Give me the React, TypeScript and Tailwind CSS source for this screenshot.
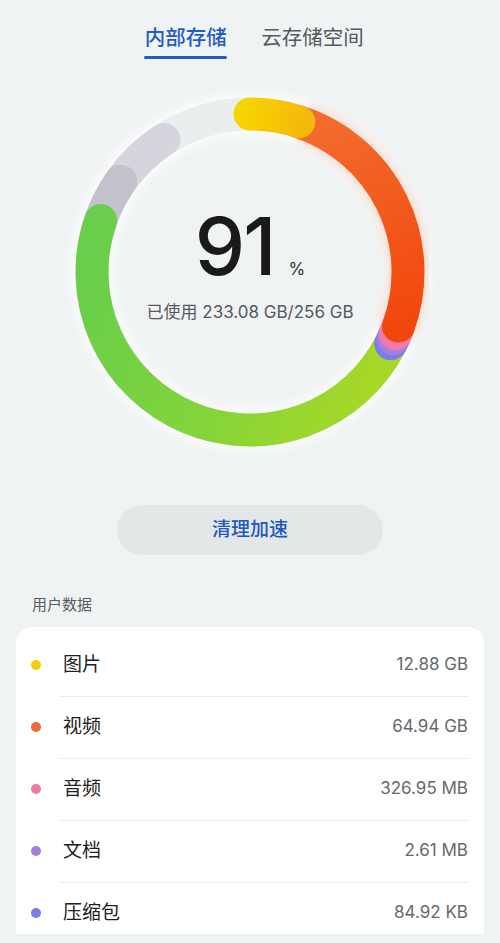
import React from "react";

const CX = 200;
const CY = 200;
const R = 158;

function pt(a: number) {
  const rad = (a * Math.PI) / 180;
  return [CX + R * Math.sin(rad), CY - R * Math.cos(rad)];
}

function arc(a1: number, a2: number) {
  const [x1, y1] = pt(a1);
  const [x2, y2] = pt(a2);
  const large = a2 - a1 > 180 ? 1 : 0;
  return `M ${x1.toFixed(2)} ${y1.toFixed(2)} A ${R} ${R} 0 ${large} 1 ${x2.toFixed(2)} ${y2.toFixed(2)}`;
}

// drawn bottom → top; each end cap sits over the next segment
const segments = [
  { from: 305, to: 327, stroke: "#d6d5de" },
  { from: 289, to: 305, stroke: "#c3c1cb" },
  { from: 117, to: 289, stroke: "url(#green)" },
  { from: 114, to: 117, stroke: "#7b7cf0" },
  { from: 112, to: 115, stroke: "#a77ee0" },
  { from: 110, to: 113, stroke: "#f07aa8" },
  { from: 18, to: 110, stroke: "url(#orange)" },
  { from: 0, to: 18, stroke: "url(#yellow)" },
];

const rows = [
  { name: "图片", size: "12.88 GB", dot: "bg-[#f2cf00]" },
  { name: "视频", size: "64.94 GB", dot: "bg-[#ee6a3a]" },
  { name: "音频", size: "326.95 MB", dot: "bg-[#ee7aa6]" },
  { name: "文档", size: "2.61 MB", dot: "bg-[#a27fdc]" },
  { name: "压缩包", size: "84.92 KB", dot: "bg-[#7e7ee8]" },
];

function Ring() {
  return (
    <svg width="400" height="400" viewBox="0 0 400 400" className="block">
      <defs>
        <linearGradient id="yellow" gradientUnits="userSpaceOnUse" x1="195" y1="42" x2="255" y2="52">
          <stop offset="0" stopColor="#f7d400" />
          <stop offset="1" stopColor="#f5b80c" />
        </linearGradient>
        <linearGradient id="orange" gradientUnits="userSpaceOnUse" x1="260" y1="50" x2="350" y2="255">
          <stop offset="0" stopColor="#f26c2e" />
          <stop offset="1" stopColor="#f2470c" />
        </linearGradient>
        <linearGradient id="green" gradientUnits="userSpaceOnUse" x1="350" y1="260" x2="45" y2="150">
          <stop offset="0" stopColor="#a8d826" />
          <stop offset="0.5" stopColor="#82d43a" />
          <stop offset="1" stopColor="#68ce4c" />
        </linearGradient>
        <filter id="glow" x="-20%" y="-20%" width="140%" height="140%">
          <feGaussianBlur stdDeviation="6" />
        </filter>
      </defs>
      <circle cx={CX} cy={CY} r={R} fill="none" stroke="#ffffff" strokeWidth="40" opacity="0.9" filter="url(#glow)" />
      <path d={arc(20, 112)} fill="none" stroke="#f26a2c" strokeWidth="34" opacity="0.35" filter="url(#glow)" />
      <circle cx={CX} cy={CY} r={R} fill="none" stroke="#ebeeee" strokeWidth="33" />
      {segments.map((s, i) => (
        <path key={i} d={arc(s.from, s.to)} fill="none" stroke={s.stroke} strokeWidth="33" strokeLinecap="round" />
      ))}
    </svg>
  );
}

export default function App() {
  return (
    <div
      className="w-[500px] h-[943px] overflow-hidden bg-[#f0f3f3] flex flex-col"
      style={{ fontFamily: 'Inter, "Noto Sans CJK SC", sans-serif' }}
    >
      {/* tabs */}
      <div className="h-[72px] flex justify-center items-start pt-[24px] gap-[34px] pl-[8px]">
        <div className="flex flex-col items-center">
          <span className="text-[20.5px] leading-[28px] font-medium text-[#1f5cc4]">内部存储</span>
          <span className="mt-[4px] w-[83px] h-[3px] rounded-full bg-[#1f5cc4]" />
        </div>
        <span className="text-[20.5px] leading-[28px] text-[#555a5e]">云存储空间</span>
      </div>

      {/* usage ring */}
      <div className="relative mx-auto w-[400px] h-[400px]">
        <Ring />
        <div className="absolute inset-0 flex flex-col items-center pt-[134px]">
          <div className="flex items-baseline">
            <span className="text-[80px] leading-none font-medium text-[#1a1a1a] tracking-[-2px]">91</span>
            <span className="ml-[14px] text-[17px] text-[#333]">%</span>
          </div>
          <span className="mt-[14px] text-[17px] text-[#555a5e]">已使用 233.08 GB/256 GB</span>
        </div>
      </div>

      {/* clean button */}
      <div className="mt-[33px] flex justify-center">
        <button className="w-[266px] h-[50px] rounded-full bg-[#e4e7e8] text-[19px] font-medium text-[#2257c0]">
          清理加速
        </button>
      </div>

      <div className="mt-[40px] pl-[32px] text-[15px] leading-[20px] text-[#585c60]">用户数据</div>

      {/* user data list */}
      <div className="mt-[12px] mx-[16px] h-[307px] overflow-hidden rounded-t-2xl bg-white pt-[7px]">
        {rows.map((r, i) => (
          <div key={r.name} className="h-[62px] flex items-center relative">
            {i > 0 && <div className="absolute top-0 left-[44px] right-[16px] h-px bg-[#ececec]" />}
            <span className={`ml-[15px] w-[10px] h-[10px] rounded-full ${r.dot}`} />
            <span className="ml-[22px] text-[19px] text-[#222]">{r.name}</span>
            <span className="ml-auto mr-[16px] text-[17px] text-[#666a6e]">{r.size}</span>
          </div>
        ))}
      </div>
    </div>
  );
}
